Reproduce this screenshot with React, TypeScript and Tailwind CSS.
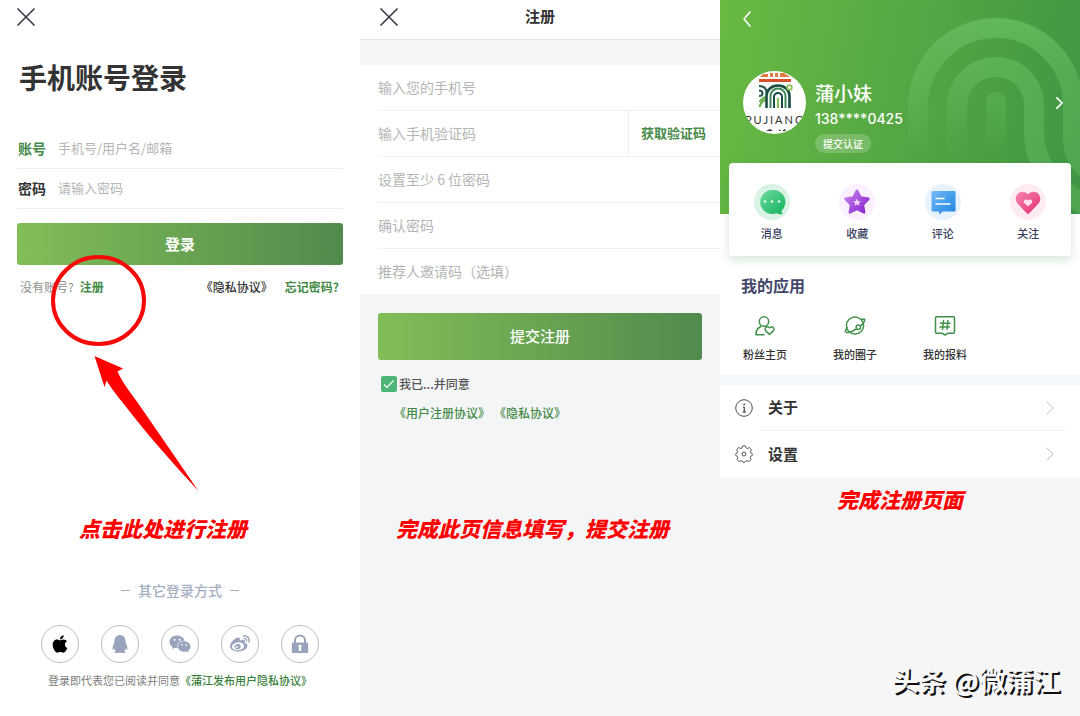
import { useState } from 'react';
import type { ReactNode } from 'react';
import { FaApple, FaQq, FaWeibo } from 'react-icons/fa';
import { AiFillWechat } from 'react-icons/ai';

type IconItem = { label: string; icon: ReactNode };

function LockIcon() {
  return (
    <svg viewBox="0 0 18 20" className="w-[18px] h-5" fill="none">
      <path d="M4 9V6.500a5 5 0 0 1 10 0V9" stroke="#99a3bb" strokeWidth="2" />
      <path
        fillRule="evenodd"
        d="M2 8.500h14a1.200 1.200 0 0 1 1.200 1.200v8a1.300 1.300 0 0 1-1.300 1.300H2.100A1.300 1.300 0 0 1 .8 17.700v-8A1.200 1.200 0 0 1 2 8.500Zm7 2.200a1.600 1.600 0 0 0-1 2.900l-.3 3.400h2.600l-.3-3.400a1.600 1.600 0 0 0-1-2.900Z"
        fill="#99a3bb"
      />
    </svg>
  );
}

function CloseIcon() {
  return (
    <svg viewBox="0 0 18 18" className="w-[18px] h-[18px]" fill="none" stroke="#3c3f4a" strokeWidth="1.700" strokeLinecap="round">
      <path d="M1 1l16 16M17 1L1 17" />
    </svg>
  );
}

function ChevronRight({ className }: { className: string }) {
  return (
    <svg viewBox="0 0 8 14" className={className} fill="none" stroke="currentColor" strokeLinecap="round" strokeLinejoin="round">
      <path d="M1 1l6 6-6 6" />
    </svg>
  );
}

// Hand-drawn style red notes placed under each step
function Note({ children, className }: { children: ReactNode; className: string }) {
  return <p className={`text-[21px] leading-7 font-black italic text-[#ff0000] whitespace-nowrap ${className}`}>{children}</p>;
}

const socialLogins: IconItem[] = [
  { label: 'Apple', icon: <FaApple className="w-5 h-5 text-black" /> },
  { label: 'QQ', icon: <FaQq className="w-[18px] h-[18px]" /> },
  { label: '微信', icon: <AiFillWechat className="w-6 h-6" /> },
  { label: '微博', icon: <FaWeibo className="w-5 h-5" /> },
  { label: '账号密码', icon: <LockIcon /> },
];

function LoginPanel() {
  return (
    <section className="relative bg-white px-[17px]">
      <header className="flex h-[33px] items-center">
        <button type="button" aria-label="关闭">
          <CloseIcon />
        </button>
      </header>

      <h1 className="mt-6 pl-0.5 text-[28px] leading-10 font-bold text-[#333]">手机账号登录</h1>

      <form className="mt-8" onSubmit={(e) => e.preventDefault()}>
        <div className="flex h-10 items-center border-b border-[#eeeff1] pl-px">
          <label htmlFor="account" className="w-10 shrink-0 text-sm leading-5 pb-0.5 font-bold text-[#448a47]">账号</label>
          <input id="account" type="text" placeholder="手机号/用户名/邮箱" className="min-w-0 flex-1 pb-0.5 text-[13px] outline-none placeholder:text-[#b5b5b5]" />
        </div>
        <div className="flex h-10 items-center border-b border-[#eeeff1] pl-px">
          <label htmlFor="password" className="w-10 shrink-0 text-sm leading-5 pb-0.5 font-bold text-[#333]">密码</label>
          <input id="password" type="password" placeholder="请输入密码" className="min-w-0 flex-1 pb-0.5 text-[13px] outline-none placeholder:text-[#b5b5b5]" />
        </div>
        <button type="submit" className="mt-3.5 h-[42px] w-full rounded-[3px] bg-linear-to-r from-[#82be56] to-[#508b4d] text-[15px] font-bold text-white">
          登录
        </button>
      </form>

      <div className="mt-3 flex h-5 items-center pl-[3px] pr-1 text-xs">
        <span className="text-[#8f8f8f]">没有账号?</span>
        <a href="#register" className="ml-1.5 font-bold text-[#448a47]">注册</a>
        <a href="#privacy" className="ml-auto font-medium text-[#333]">《隐私协议》</a>
        <a href="#forgot" className="ml-3 font-bold text-[#448a47]">忘记密码?</a>
      </div>

      <Note className="mt-[217px] pl-[62px]">点击此处进行注册</Note>

      <div className="mt-9 flex h-6 items-center justify-center gap-2 text-sm text-[#a6aec2]">
        <span className="h-px w-[9px] bg-[#a6aec2]" />
        <span className="font-medium">其它登录方式</span>
        <span className="h-px w-[9px] bg-[#a6aec2]" />
      </div>

      <div className="mt-[23px] flex justify-center gap-[22px]">
        {socialLogins.map((item) => (
          <button
            key={item.label}
            type="button"
            aria-label={item.label}
            className="flex h-[38px] w-[38px] items-center justify-center rounded-full border border-[#bfbfbf] text-[#99a3bb]"
          >
            {item.icon}
          </button>
        ))}
      </div>

      <p className="mt-[7px] text-center text-[11px] leading-5 whitespace-nowrap text-[#7d7d7d]">
        登录即代表您已阅读并同意
        <a href="#privacy" className="font-medium text-[#3c8040]">《蒲江发布用户隐私协议》</a>
      </p>

      {/* Circle and arrow pointing at the register link */}
      <svg viewBox="0 0 160 240" className="pointer-events-none absolute top-[254px] left-[48px] h-[240px] w-[160px]" aria-hidden="true">
        <ellipse cx="50.500" cy="46.500" rx="45.500" ry="43.500" fill="none" stroke="#f50a0a" strokeWidth="4" />
        <path d="M46.500 102L75 114.500l-5.500 3c5 12 17 26 26 39.500L150.500 237C132 217 105 187 86 163c-11-14-21-26-27.500-36.500l-2 6.500Z" fill="#ff0000" />
      </svg>
    </section>
  );
}

function RegisterPanel() {
  const [agreed, setAgreed] = useState(true);
  const inputClass = 'h-full w-full min-w-0 flex-1 pb-0.5 text-sm outline-none placeholder:text-[#b5b5b5]';

  return (
    <section className="bg-[#f4f5f7]">
      <header className="grid h-10 grid-cols-3 items-center border-b border-[#e4e5e7] bg-white px-5 pb-1.5">
        <button type="button" aria-label="关闭" className="justify-self-start">
          <CloseIcon />
        </button>
        <h2 className="text-center text-[15px] font-bold text-[#333]">注册</h2>
      </header>

      <form onSubmit={(e) => e.preventDefault()}>
        <div className="mt-[25px] bg-white pl-[18px]">
          <div className="h-[46px] border-b border-[#eff0f1]">
            <input type="tel" aria-label="手机号" placeholder="输入您的手机号" className={inputClass} />
          </div>
          <div className="flex h-[46px] border-b border-[#eff0f1]">
            <input type="text" aria-label="验证码" placeholder="输入手机验证码" className={inputClass} />
            <button type="button" className="border-l border-[#eff0f1] pr-3.5 pb-0.5 pl-3 text-[13px] font-bold text-[#448a47]">获取验证码</button>
          </div>
          <div className="h-[46px] border-b border-[#eff0f1]">
            <input type="password" aria-label="密码" placeholder="设置至少 6 位密码" className={inputClass} />
          </div>
          <div className="h-[46px] border-b border-[#eff0f1]">
            <input type="password" aria-label="确认密码" placeholder="确认密码" className={inputClass} />
          </div>
          <div className="h-[45px]">
            <input type="text" aria-label="邀请码" placeholder="推荐人邀请码（选填）" className={inputClass} />
          </div>
        </div>

        <div className="px-[18px]">
          <button type="submit" className="mt-[19px] h-[47px] w-full rounded-[3px] bg-linear-to-r from-[#82be56] to-[#508b4d] text-[15px] font-medium text-white">
            提交注册
          </button>
          <label className="mt-3.5 flex h-5 items-center gap-0.5 pl-[3px] text-xs font-medium text-[#555]">
            <span className="grid h-4 w-4">
              <input
                type="checkbox"
                checked={agreed}
                onChange={(e) => setAgreed(e.target.checked)}
                className="col-start-1 row-start-1 h-4 w-4 appearance-none rounded-xs border border-[#4cb577] checked:bg-[#4cb577]"
              />
              {agreed && (
                <svg viewBox="0 0 16 16" className="pointer-events-none col-start-1 row-start-1 h-4 w-4" fill="none" stroke="#fff" strokeWidth="1.200">
                  <path d="M3 8.500l3 3L12.500 4.500" />
                </svg>
              )}
            </span>
            我已...并同意
          </label>
          <div className="mt-[9px] flex gap-1 pl-4 text-xs leading-5 font-medium text-[#448a47]">
            <a href="#terms">《用户注册协议》</a>
            <a href="#privacy">《隐私协议》</a>
          </div>
        </div>
      </form>

      <Note className="mt-[91px] pl-9">完成此页信息填写，提交注册</Note>
    </section>
  );
}

const shortcuts: IconItem[] = [
  {
    label: '消息',
    icon: (
      <svg viewBox="0 0 36 36" className="h-9 w-9">
        <defs>
          <linearGradient id="msg" x1="0" y1="0" x2="1" y2="1"><stop stopColor="#6fdca0" /><stop offset="1" stopColor="#12b25c" /></linearGradient>
        </defs>
        <circle cx="18" cy="18" r="18" fill="#d9f3e4" />
        <path d="M18 6a12 12 0 1 0 4.500 23.200c2 .9 4 1.200 6 .8-.8-1-1-2.200-.7-3.500A12 12 0 0 0 18 6Z" fill="url(#msg)" />
        <g fill="#e6fff0"><circle cx="11" cy="17.500" r="1.300" /><circle cx="18" cy="17.500" r="1.300" /><circle cx="25" cy="17.500" r="1.300" /></g>
      </svg>
    ),
  },
  {
    label: '收藏',
    icon: (
      <svg viewBox="0 0 36 36" className="h-9 w-9">
        <defs>
          <linearGradient id="fav" x1="0" y1="0" x2="1" y2="1"><stop stopColor="#c886f2" /><stop offset="1" stopColor="#8420c8" /></linearGradient>
        </defs>
        <circle cx="18" cy="18" r="18" fill="#fbf0fd" />
        <path d="M18 6.500l3.600 7 7.900 1.300-5.500 5.800 1.100 7.900-7.100-3.500-7.100 3.500 1.100-7.900-5.500-5.800 7.900-1.300Z" fill="url(#fav)" stroke="url(#fav)" strokeWidth="2.500" strokeLinejoin="round" />
        <path d="M18 14.500l1.200 2.400 2.600.4-1.900 1.900.4 2.600-2.300-1.200-2.300 1.200.4-2.600-1.900-1.900 2.600-.4Z" fill="#f0d3fb" />
      </svg>
    ),
  },
  {
    label: '评论',
    icon: (
      <svg viewBox="0 0 36 36" className="h-9 w-9">
        <defs>
          <linearGradient id="cmt" x1="0" y1="0" x2="1" y2="1"><stop stopColor="#74b8f7" /><stop offset="1" stopColor="#1c85e0" /></linearGradient>
        </defs>
        <circle cx="18" cy="18" r="18" fill="#e6f2fe" />
        <path d="M8 7h21a1.500 1.500 0 0 1 1.500 1.500v17A1.500 1.500 0 0 1 29 27.500H18l-4 3v-3H8A1.500 1.500 0 0 1 6.500 26V8.500A1.500 1.500 0 0 1 8 7Z" fill="url(#cmt)" />
        <path d="M11 14.500h8M11 20h14" stroke="#fff" strokeWidth="1.600" strokeLinecap="round" />
      </svg>
    ),
  },
  {
    label: '关注',
    icon: (
      <svg viewBox="0 0 36 36" className="h-9 w-9">
        <defs>
          <linearGradient id="flw" x1="0" y1="0" x2="1" y2="1"><stop stopColor="#f78ab4" /><stop offset="1" stopColor="#e32a6c" /></linearGradient>
        </defs>
        <circle cx="18" cy="18" r="18" fill="#fdebf2" />
        <path d="M18 10.500c2.500-3.600 8.500-3.600 11 .2 2.200 3.400 1.400 6.800-1.200 9.600L19.500 29a2 2 0 0 1-3 0l-8.300-8.700c-2.600-2.800-3.400-6.200-1.200-9.600 2.500-3.800 8.500-3.800 11-.2Z" fill="url(#flw)" />
        <path d="M18 16.500c1-1.400 3.200-1.300 3.900.1.600 1.200.2 2.200-.6 3L18 22.500l-3.300-2.900c-.8-.8-1.200-1.800-.6-3 .7-1.400 2.900-1.500 3.900-.1Z" fill="#ffe0ec" />
      </svg>
    ),
  },
];

const apps: IconItem[] = [
  {
    label: '粉丝主页',
    icon: (
      <svg viewBox="0 0 22 22" className="h-[22px] w-[22px]" fill="none" stroke="#3f9149" strokeWidth="1.500" strokeLinecap="round" strokeLinejoin="round">
        <circle cx="10" cy="6.500" r="4.700" />
        <path d="M7 11.500c-3.300 1.300-5 4.300-5 8.200h8" />
        <path d="M15.500 19.500l-3.700-3.600c-1.600-1.700-.5-4.200 1.500-4.200 1 0 1.700.5 2.200 1.200.5-.7 1.200-1.200 2.200-1.200 2 0 3.100 2.500 1.500 4.200Z" />
      </svg>
    ),
  },
  {
    label: '我的圈子',
    icon: (
      <svg viewBox="0 0 22 22" className="h-[22px] w-[22px]" fill="none" stroke="#3f9149" strokeWidth="1.500" strokeLinecap="round" strokeLinejoin="round">
        <circle cx="11" cy="10.500" r="8.600" />
        <path d="M17.300 4.500l3.200-.4c.5 2.200-1.200 4.600-4.300 7M12.300 13.800c-4.500 3-9.200 4.400-10.800 3-.2-1.300.4-2.600 1.500-4" />
        <circle cx="14.300" cy="12.300" r="2.200" fill="#fff" />
      </svg>
    ),
  },
  {
    label: '我的报料',
    icon: (
      <svg viewBox="0 0 22 22" className="h-[22px] w-[22px]" fill="none" stroke="#3f9149" strokeWidth="1.500" strokeLinecap="round" strokeLinejoin="round">
        <path d="M2.500 1.800h17a1 1 0 0 1 1 1v14.400a1 1 0 0 1-1 1H14L11 20l-3-1.800H2.500a1 1 0 0 1-1-1V2.800a1 1 0 0 1 1-1Z" />
        <path d="M9.500 5.500l-1 9M14 5.500l-1 9M6.500 8.200h9.500M6 12h9.500" />
      </svg>
    ),
  },
];

const settings: IconItem[] = [
  {
    label: '关于',
    icon: (
      <svg viewBox="0 0 18 18" className="h-[18px] w-[18px]" fill="none" stroke="#555" strokeWidth="1">
        <circle cx="9" cy="9" r="8.300" />
        <path d="M9.300 8v5M8 8.200h1.300M7.800 13h3" strokeWidth="1.300" />
        <circle cx="9.200" cy="5.500" r=".6" fill="#555" />
      </svg>
    ),
  },
  {
    label: '设置',
    icon: (
      <svg viewBox="0 0 18 18" className="h-[18px] w-[18px]" fill="none" stroke="#555" strokeWidth="1" strokeLinejoin="round">
        <path d="M7.400 1.200c.5-.6 2.700-.6 3.200 0l.5 1.700 1.400.6 1.600-.9c.9.1 2.300 1.700 2.200 2.500l-.9 1.600.5 1.300 1.300.6c.3.600.3 1.300 0 1.900l-1.500.8-.5 1.300.6 1.700c-.1.900-1.600 2.300-2.500 2.200l-1.500-1-1.200.5-.6 1.200c-.6.300-1.400.3-2 0l-.6-1.200-1.300-.5-1.500 1c-.9 0-2.400-1.400-2.400-2.200l.6-1.700-.5-1.300-1.500-.8c-.3-.6-.3-1.300 0-1.900L2.100 8l.5-1.300-.8-1.600c0-.9 1.300-2.400 2.200-2.500l1.600.9L7 2.900Z" />
        <circle cx="9" cy="9" r="2" />
      </svg>
    ),
  },
];

function Avatar() {
  return (
    <svg viewBox="0 0 63 63" className="h-[63px] w-[63px] shrink-0 rounded-full bg-white" role="img" aria-label="头像">
      <g fill="#df7a3c">
        <path d="M17 6l3-3h5v3ZM27 2h3v4h-3ZM32 2h3v4h-3ZM37 2h4l6 4H37Z" />
        <path d="M16 8h32v3H16Z" fill="#d8502b" />
      </g>
      <g fill="none">
        <path d="M16 15c5 0 7.500 3 7.500 7M16 19.500c2.500 0 3.500 1.500 3.500 3s-1 2.500-3.500 2.500" stroke="#27584a" strokeWidth="2" />
        <path d="M16.500 36c1-4 3-6 6-7.500M16.500 31c1.500-2.500 3.500-4 6-5" stroke="#6fb551" strokeWidth="2.200" />
        <path d="M23.500 37V24.500a11.500 10 0 0 1 23 0V37" stroke="#174c43" strokeWidth="2.600" />
        <path d="M27.500 37V25a7.500 7.500 0 0 1 15 0v12" stroke="#3c8b56" strokeWidth="2" />
        <path d="M31 37V26a4 4 0 0 1 8 0v11" stroke="#174c43" strokeWidth="2" />
        <path d="M35 37V27" stroke="#8cc055" strokeWidth="2.200" />
        <circle cx="46.500" cy="16.500" r="2.400" stroke="#8cc055" strokeWidth="1.700" />
      </g>
      <text x="32" y="53" textAnchor="middle" fontSize="11" fontFamily="Lato, sans-serif" letterSpacing="2" fill="#333">PUJIANG</text>
      <path d="M23 60l4-2 3 2ZM36 58l2 2h-2ZM39 60l3-2 1 2Z" fill="#333" />
    </svg>
  );
}

function ProfilePanel() {
  return (
    <section className="bg-[#f6f6f7]">
      <div className="bg-white">
        <header className="relative overflow-hidden bg-linear-[100deg] from-[#69b942] to-[#3f9645] pb-[61px]">
          {/* Arch pattern from the brand mark, left legs fade out */}
          <svg viewBox="0 0 172 214" className="absolute top-0 right-0 h-[214px] w-[172px]" fill="none" strokeWidth="20" aria-hidden="true">
            <defs>
              <linearGradient id="archLeft" gradientUnits="userSpaceOnUse" x1="0" y1="18" x2="0" y2="155">
                <stop stopColor="#6dc468" stopOpacity=".65" />
                <stop offset=".43" stopColor="#6dc468" stopOpacity=".42" />
                <stop offset="1" stopColor="#6dc468" stopOpacity="0" />
              </linearGradient>
              <linearGradient id="archRight" gradientUnits="userSpaceOnUse" x1="0" y1="18" x2="0" y2="214">
                <stop stopColor="#6dc468" stopOpacity=".65" />
                <stop offset=".3" stopColor="#6dc468" stopOpacity=".42" />
                <stop offset="1" stopColor="#6dc468" stopOpacity=".32" />
              </linearGradient>
            </defs>
            <path d="M10 155v-49a78 78 0 0 1 78-78" stroke="url(#archLeft)" />
            <path d="M88 28a77 77 0 0 1 77 78v32c0 18 8 28 24 40" stroke="url(#archRight)" />
            <path d="M49 155v-49a39 39 0 0 1 39-39" stroke="url(#archLeft)" />
            <path d="M88 67a38 38 0 0 1 38 39v25c0 36 20 55 56 78" stroke="url(#archRight)" />
            <path d="M78 155v-53a10 10 0 0 1 20 0v53Z" fill="url(#archLeft)" />
          </svg>

          <div className="relative flex h-[71px] items-start px-[22px] pt-[11px]">
            <button type="button" aria-label="返回" className="text-white">
              <svg viewBox="0 0 9 16" className="h-4 w-[9px]" fill="none" stroke="currentColor" strokeWidth="1.600" strokeLinecap="round" strokeLinejoin="round">
                <path d="M8 1L2 8l6 7" />
              </svg>
            </button>
          </div>

          <div className="relative flex pl-[23px] pr-[17px] text-white">
            <Avatar />
            <div className="ml-[9px] flex-1 pt-2.5">
              <p className="text-[19px] leading-6 font-medium">蒲小妹</p>
              <p className="mt-1 font-['Inter','Noto_Sans_CJK_SC',sans-serif] text-sm leading-5 font-medium">138****0425</p>
              <button type="button" className="mt-[5px] block h-[19px] rounded-full bg-white/20 px-2 text-[10px] leading-[19px] font-medium">提交认证</button>
            </div>
            <button type="button" aria-label="个人资料" className="mt-[26px] self-start">
              <ChevronRight className="h-3 w-[7px] stroke-2" />
            </button>
          </div>
        </header>

        <nav className="relative mx-[9px] -mt-[51px] grid grid-cols-4 rounded-[4px] bg-white pt-[21px] pb-[15px] shadow-[0_4px_10px_rgba(70,150,90,0.22)]">
          {shortcuts.map((item) => (
            <a key={item.label} href="#" className="flex flex-col items-center gap-[5px] text-[11px] leading-4 font-medium text-[#3a3d5c]">
              {item.icon}
              {item.label}
            </a>
          ))}
        </nav>

        <h2 className="mt-[17px] pl-[21px] text-base leading-6 font-bold text-[#43466b]">我的应用</h2>
        <nav className="mt-[18px] grid grid-cols-4 pb-3">
          {apps.map((item) => (
            <a key={item.label} href="#" className="flex flex-col items-center gap-2 text-[11px] leading-[18px] font-medium text-[#333]">
              {item.icon}
              {item.label}
            </a>
          ))}
        </nav>
      </div>

      <ul className="border-t-[10px] border-[#f3f8fb] bg-white">
        {settings.map((item, i) => (
          <li key={item.label}>
            <a href="#" className="flex h-[46px] items-center pl-[15px] pr-3.5 text-[#333]">
              {item.icon}
              <span className={`ml-[9px] flex h-full flex-1 items-center justify-between pl-1.5 pr-3 text-[15px] font-bold ${i === 0 ? 'border-b border-[#eeeff0]' : ''}`}>
                {item.label}
                <ChevronRight className="h-3.5 w-2 text-[#bdbdbd]" />
              </span>
            </a>
          </li>
        ))}
      </ul>

      <Note className="mt-2 text-center">完成注册页面</Note>
    </section>
  );
}

export default function App() {
  return (
    <main className="relative grid min-h-screen grid-cols-3 font-['Noto_Sans_CJK_SC',sans-serif]">
      <LoginPanel />
      <RegisterPanel />
      <ProfilePanel />
      <p className="absolute right-5 bottom-[18px] text-[27px] leading-9 font-bold whitespace-nowrap text-[#f8f8f8] [text-shadow:2px_2px_0_#111]">
        头条 @微蒲江
      </p>
    </main>
  );
}
